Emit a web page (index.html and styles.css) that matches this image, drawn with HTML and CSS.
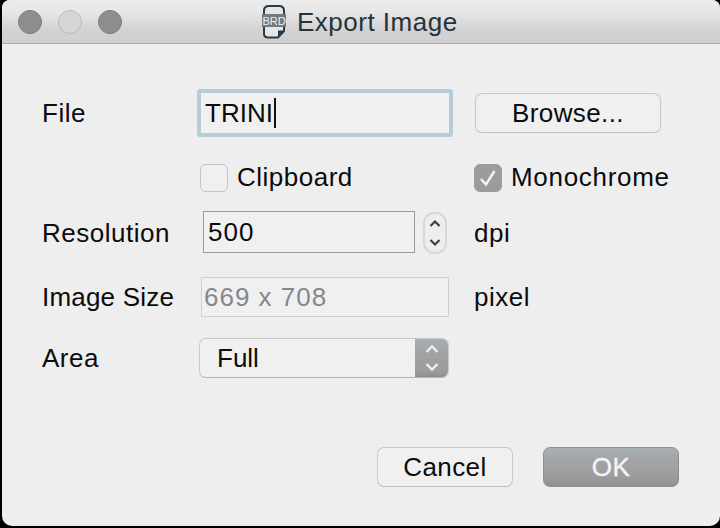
FILE: index.html
```html
<!DOCTYPE html>
<html lang="en">
<head>
<meta charset="utf-8">
<title>Export Image</title>
<link rel="stylesheet" href="styles.css">
</head>
<body>
<div class="window">
  <header class="titlebar">
    <div class="lights">
      <span class="light"></span>
      <span class="light light-off"></span>
      <span class="light"></span>
    </div>
    <div class="title">
      <svg class="doc-icon" width="26" height="34" viewBox="0 0 26 34">
        <path d="M3 5.5 Q3 1 8 1 H18 Q23 1 23 5.5 V26 L17 32.5 H7 Q3 32.5 3 28.5 Z" fill="#e6e6e6" stroke="#2b3a46" stroke-width="2"/>
        <path d="M23 25.5 H17 V32 Z" fill="#2b3a46"/>
        <rect x="1" y="9" width="24" height="13" fill="#6f7a82"/>
        <text x="13" y="20" class="doc-text" text-anchor="middle">BRD</text>
      </svg>
      <span>Export Image</span>
    </div>
  </header>
  <main class="content">
    <div class="row row-file">
      <label class="label">File</label>
      <div class="input-focus"><span class="input-value">TRINI</span><span class="caret"></span></div>
      <button class="btn btn-browse">Browse...</button>
    </div>
    <div class="row row-checks">
      <span></span>
      <div class="check-item check-left"><span class="check"></span><span>Clipboard</span></div>
      <div class="check-item"><span class="check check-on">
        <svg width="28" height="28" viewBox="0 0 28 28"><path d="M7 15 L12 20.5 L20.5 7" fill="none" stroke="#f4f4f4" stroke-width="2.4"/></svg>
      </span><span class="check-wide">Monochrome</span></div>
    </div>
    <div class="row row-res">
      <label class="label">Resolution</label>
      <div class="spin-cell">
        <div class="input input-res">500</div>
        <div class="stepper">
          <svg width="14" height="34" viewBox="0 0 14 34"><path d="M2.5 10 L7 5.5 L11.5 10 M2.5 24 L7 28.5 L11.5 24" fill="none" stroke="#36424c" stroke-width="2.2"/></svg>
        </div>
      </div>
      <span class="unit">dpi</span>
    </div>
    <div class="row row-size">
      <label class="label label-size">Image Size</label>
      <div class="input input-disabled">669 x 708</div>
      <span class="unit">pixel</span>
    </div>
    <div class="row row-area">
      <label class="label">Area</label>
      <div class="select">
        <span class="select-value">Full</span>
        <span class="select-arrows">
          <svg width="16" height="34" viewBox="0 0 16 34"><path d="M2.5 11 L8 5.5 L13.5 11 M2.5 23 L8 28.5 L13.5 23" fill="none" stroke="#eeeeee" stroke-width="2.4"/></svg>
        </span>
      </div>
    </div>
    <div class="actions">
      <button class="btn btn-action">Cancel</button>
      <button class="btn btn-action btn-default">OK</button>
    </div>
  </main>
</div>
</body>
</html>
```
FILE: styles.css
```css
* { box-sizing: border-box; }
html, body { margin: 0; padding: 0; background: #000; }
body { width: 720px; height: 528px; overflow: hidden; font-family: "Liberation Sans", Arial, sans-serif; font-size: 26px; letter-spacing: 0.5px; color: #0c0c0c; }
.window { margin-left: 2px; width: 718px; height: 526px; background: #eeeeee; border-radius: 8px 8px 10px 10px; overflow: hidden; display: flex; flex-direction: column; }
.titlebar { height: 44px; flex: none; background: linear-gradient(#ececec, #e6e6e6 30%, #d2d2d2 70%, #d0d0d0); border-bottom: 1px solid #a8a8a4; display: flex; align-items: center; position: relative; }
.lights { display: flex; gap: 16px; padding-left: 16px; }
.light { width: 24px; height: 24px; border-radius: 50%; background: #8e8e90; border: 1px solid #7c7c80; }
.light-off { background: #d6d6d6; border-color: #b8b8b6; }
.title { position: absolute; left: 259px; top: 3px; height: 38px; display: flex; align-items: center; gap: 10px; color: #26323c; }
.doc-icon { display: block; flex: none; }
.doc-text { font-family: "Liberation Sans", sans-serif; font-size: 11px; letter-spacing: 0; fill: #f0f0f0; }
.content { flex: 1; padding: 45px 41px 0; display: flex; flex-direction: column; }
.row { display: grid; grid-template-columns: 154px 277px 1fr; align-items: center; }
.label { display: block; margin-left: -1px; }
.label-size { letter-spacing: 0.2px; }
.check-wide { letter-spacing: 0.7px; }
.row-file { height: 48px; }
.row-checks { height: 28px; margin-top: 25px; }
.row-res { height: 43px; margin-top: 21px; }
.row-size { height: 40px; margin-top: 23px; }
.row-area { height: 40px; margin-top: 21px; }
.row-res .label, .row-res .unit, .row-size .label, .row-size .unit, .row-size .input-disabled { padding-top: 1px; }
.input-focus { width: 256px; height: 48px; border: 4px solid #b4cdd8; border-radius: 3px; background: #f0f0f0; display: flex; align-items: center; padding-left: 4px; letter-spacing: 0; }
.caret { width: 2px; height: 30px; background: #111; margin-left: 1px; }
.btn { font-family: inherit; font-size: 26px; letter-spacing: 0.4px; color: #0c0c0c; background: #f0f0f0; border: 1px solid #c8c8c8; border-bottom-color: #bdbdbd; border-radius: 7px; padding: 0; height: 40px; }
.btn-browse { width: 186px; margin-left: 1px; }
.check-item { display: flex; align-items: center; gap: 9px; }
.check-left { margin-left: 3px; }
.check { width: 28px; height: 28px; flex: none; border: 1px solid #c4c4c4; border-radius: 6px; background: #f0f0f0; display: block; }
.check-on { background: #9c9c9e; border-color: #9c9c9e; position: relative; }
.check-on svg { position: absolute; left: -1px; top: -1px; }
.spin-cell { display: flex; align-items: flex-start; align-self: start; margin-left: 6px; gap: 8px; }
.input { border: 1px solid #c8c8c8; background: #f0f0f0; display: flex; align-items: center; }
.input-res { width: 212px; height: 42px; padding-left: 4px; border-color: #9a9a98; letter-spacing: 1px; }
.stepper { width: 24px; height: 42px; margin-top: 1px; border: 2px solid #d8d8d8; border-radius: 11px; display: flex; align-items: center; justify-content: center; }
.unit { display: block; }
.input-disabled { width: 248px; height: 40px; margin-left: 4px; padding-left: 2px; color: #84888c; border-color: #cfcfcf; letter-spacing: 1px; }
.select { width: 250px; height: 40px; margin-left: 2px; border: 1px solid #c8c8c8; border-bottom-color: #b4b4b4; border-radius: 7px; background: #f0f0f0; display: flex; align-items: center; justify-content: space-between; overflow: hidden; }
.select-value { padding-left: 17px; letter-spacing: 0; }
.select-arrows { width: 33px; height: 40px; background: linear-gradient(#a8b0b4, #a0a2a4 40%, #9c9c9e 80%, #8c8d90); display: flex; align-items: center; justify-content: center; }
.actions { display: flex; justify-content: flex-end; gap: 30px; margin-top: 69px; }
.btn-action { width: 136px; height: 40px; }
.btn-default { color: #f4f4f4; font-weight: 400; -webkit-text-stroke: 0.4px #f4f4f4; background: linear-gradient(#a9b1b5, #a2a5a7 30%, #9c9c9e 75%, #8f9093); border-color: #8f8f92; }
```
